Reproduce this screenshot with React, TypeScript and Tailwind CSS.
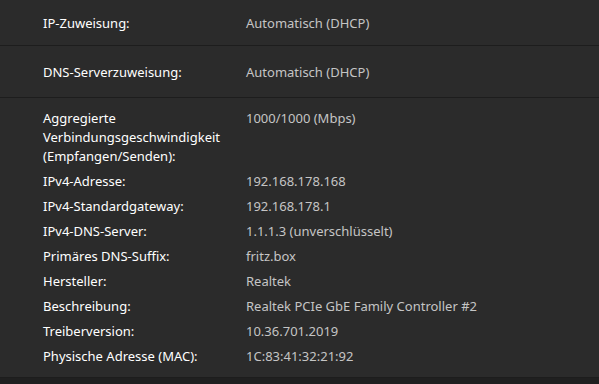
const details: [string, string][] = [
  ['Aggregierte Verbindungsgeschwindigkeit (Empfangen/Senden):', '1000/1000 (Mbps)'],
  ['IPv4-Adresse:', '192.168.178.168'],
  ['IPv4-Standardgateway:', '192.168.178.1'],
  ['IPv4-DNS-Server:', '1.1.1.3 (unverschlüsselt)'],
  ['Primäres DNS-Suffix:', 'fritz.box'],
  ['Hersteller:', 'Realtek'],
  ['Beschreibung:', 'Realtek PCIe GbE Family Controller #2'],
  ['Treiberversion:', '10.36.701.2019'],
  ['Physische Adresse (MAC):', '1C:83:41:32:21:92'],
];

function Row({ label, value }: { label: string; value: string }) {
  return (
    <div className="flex">
      <div className="w-[203px] shrink-0 pr-3 text-white">{label}</div>
      <div className="text-[#c5c5c5]">{value}</div>
    </div>
  );
}

export default function App() {
  return (
    <div
      className="h-[384px] w-[599px] overflow-hidden bg-[#2b2b2b] text-[13px] leading-[19px]"
      style={{ fontFamily: '"Noto Sans", sans-serif' }}
    >
      {/* IP assignment */}
      <div className="flex h-[46px] items-center border-b border-[#1d1d1d] pl-[43px] pt-[2px]">
        <Row label="IP-Zuweisung:" value="Automatisch (DHCP)" />
      </div>

      {/* DNS assignment */}
      <div className="flex h-[52px] items-center border-b border-[#1d1d1d] pl-[43px] pt-[2px]">
        <Row label="DNS-Serverzuweisung:" value="Automatisch (DHCP)" />
      </div>

      {/* Adapter properties */}
      <div className="flex h-[280px] flex-col gap-[6px] border-b border-[#1d1d1d] pl-[43px] pt-[11px]">
        {details.map(([label, value]) => (
          <Row key={label} label={label} value={value} />
        ))}
      </div>

      <div className="h-[6px] bg-[#202020]" />
    </div>
  );
}
